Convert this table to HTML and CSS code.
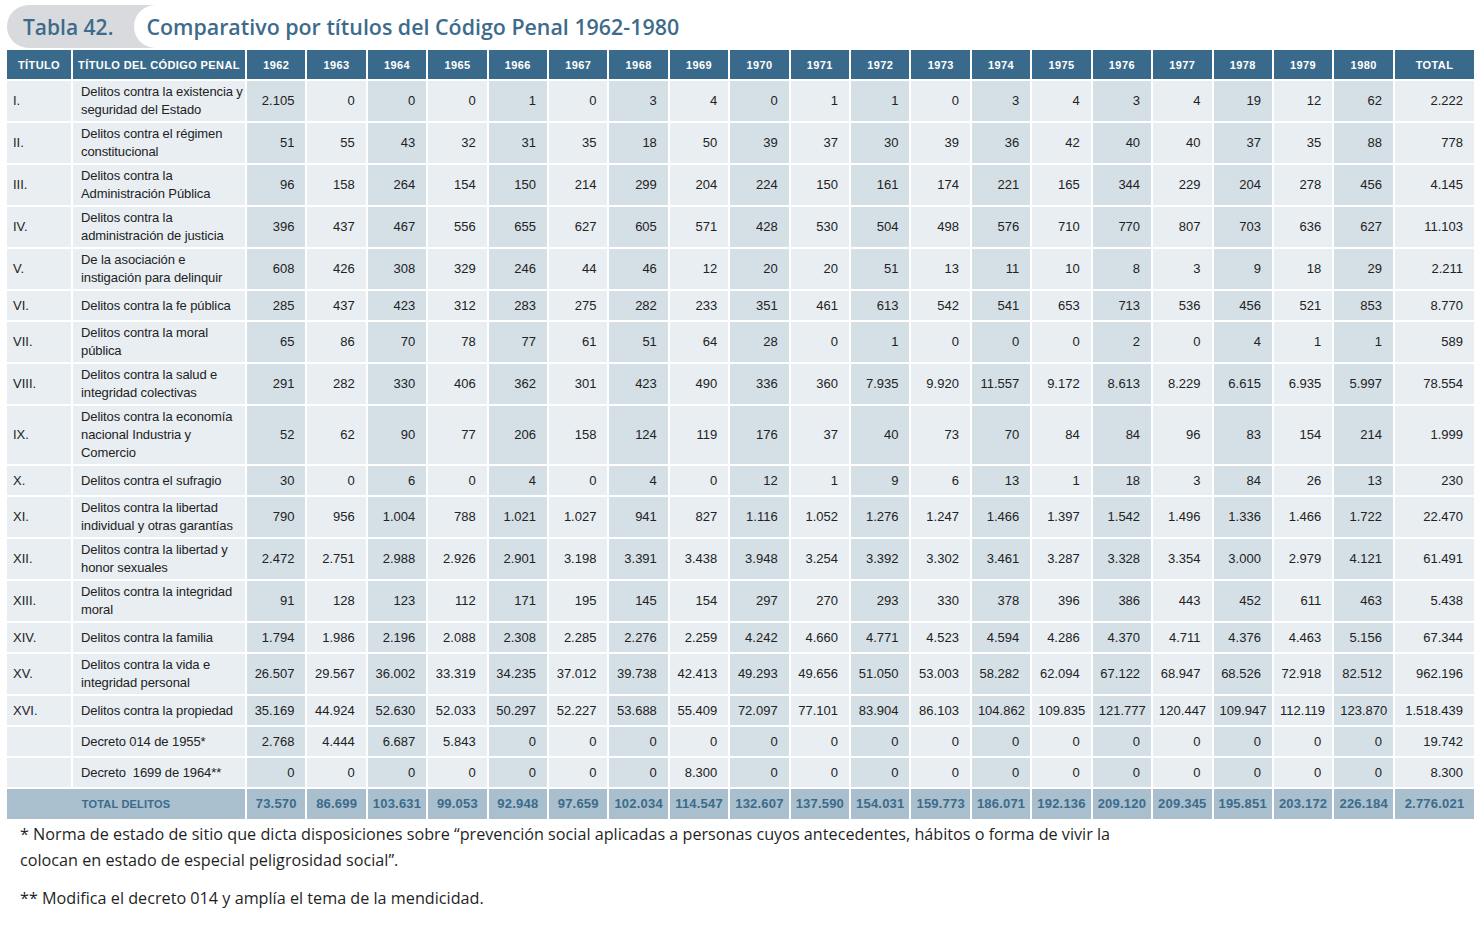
FILE: index.html
```html
<!DOCTYPE html>
<html lang="es">
<head>
<meta charset="utf-8">
<title>Tabla 42</title>
<link rel="stylesheet" href="styles.css">
</head>
<body>
<div class="page">
  <div class="caption">
    <div class="tab">Tabla 42.</div>
    <div class="heading">Comparativo por títulos del Código Penal 1962-1980</div>
  </div>
  <table class="data">
    <colgroup>
      <col class="c-num"><col class="c-desc">
      <col><col><col><col><col><col><col><col><col><col><col><col><col><col><col><col><col><col><col>
      <col class="c-total">
    </colgroup>
    <thead>
      <tr class="h31">
        <th>TÍTULO</th><th>TÍTULO DEL CÓDIGO PENAL</th>
        <th>1962</th><th>1963</th><th>1964</th><th>1965</th><th>1966</th><th>1967</th><th>1968</th><th>1969</th><th>1970</th><th>1971</th><th>1972</th><th>1973</th><th>1974</th><th>1975</th><th>1976</th><th>1977</th><th>1978</th><th>1979</th><th>1980</th>
        <th>TOTAL</th>
      </tr>
    </thead>
    <tbody>
      <tr class="h42"><td>I.</td><td>Delitos contra la existencia y<br>seguridad del Estado</td><td>2.105</td><td>0</td><td>0</td><td>0</td><td>1</td><td>0</td><td>3</td><td>4</td><td>0</td><td>1</td><td>1</td><td>0</td><td>3</td><td>4</td><td>3</td><td>4</td><td>19</td><td>12</td><td>62</td><td>2.222</td></tr>
      <tr class="h42"><td>II.</td><td>Delitos contra el régimen<br>constitucional</td><td>51</td><td>55</td><td>43</td><td>32</td><td>31</td><td>35</td><td>18</td><td>50</td><td>39</td><td>37</td><td>30</td><td>39</td><td>36</td><td>42</td><td>40</td><td>40</td><td>37</td><td>35</td><td>88</td><td>778</td></tr>
      <tr class="h42"><td>III.</td><td>Delitos contra la<br>Administración Pública</td><td>96</td><td>158</td><td>264</td><td>154</td><td>150</td><td>214</td><td>299</td><td>204</td><td>224</td><td>150</td><td>161</td><td>174</td><td>221</td><td>165</td><td>344</td><td>229</td><td>204</td><td>278</td><td>456</td><td>4.145</td></tr>
      <tr class="h42"><td>IV.</td><td>Delitos contra la<br>administración de justicia</td><td>396</td><td>437</td><td>467</td><td>556</td><td>655</td><td>627</td><td>605</td><td>571</td><td>428</td><td>530</td><td>504</td><td>498</td><td>576</td><td>710</td><td>770</td><td>807</td><td>703</td><td>636</td><td>627</td><td>11.103</td></tr>
      <tr class="h42"><td>V.</td><td>De la asociación e<br>instigación para delinquir</td><td>608</td><td>426</td><td>308</td><td>329</td><td>246</td><td>44</td><td>46</td><td>12</td><td>20</td><td>20</td><td>51</td><td>13</td><td>11</td><td>10</td><td>8</td><td>3</td><td>9</td><td>18</td><td>29</td><td>2.211</td></tr>
      <tr class="h31"><td>VI.</td><td>Delitos contra la fe pública</td><td>285</td><td>437</td><td>423</td><td>312</td><td>283</td><td>275</td><td>282</td><td>233</td><td>351</td><td>461</td><td>613</td><td>542</td><td>541</td><td>653</td><td>713</td><td>536</td><td>456</td><td>521</td><td>853</td><td>8.770</td></tr>
      <tr class="h42"><td>VII.</td><td>Delitos contra la moral<br>pública</td><td>65</td><td>86</td><td>70</td><td>78</td><td>77</td><td>61</td><td>51</td><td>64</td><td>28</td><td>0</td><td>1</td><td>0</td><td>0</td><td>0</td><td>2</td><td>0</td><td>4</td><td>1</td><td>1</td><td>589</td></tr>
      <tr class="h42"><td>VIII.</td><td>Delitos contra la salud e<br>integridad colectivas</td><td>291</td><td>282</td><td>330</td><td>406</td><td>362</td><td>301</td><td>423</td><td>490</td><td>336</td><td>360</td><td>7.935</td><td>9.920</td><td>11.557</td><td>9.172</td><td>8.613</td><td>8.229</td><td>6.615</td><td>6.935</td><td>5.997</td><td>78.554</td></tr>
      <tr class="h60"><td>IX.</td><td>Delitos contra la economía<br>nacional Industria y<br>Comercio</td><td>52</td><td>62</td><td>90</td><td>77</td><td>206</td><td>158</td><td>124</td><td>119</td><td>176</td><td>37</td><td>40</td><td>73</td><td>70</td><td>84</td><td>84</td><td>96</td><td>83</td><td>154</td><td>214</td><td>1.999</td></tr>
      <tr class="h31"><td>X.</td><td>Delitos contra el sufragio</td><td>30</td><td>0</td><td>6</td><td>0</td><td>4</td><td>0</td><td>4</td><td>0</td><td>12</td><td>1</td><td>9</td><td>6</td><td>13</td><td>1</td><td>18</td><td>3</td><td>84</td><td>26</td><td>13</td><td>230</td></tr>
      <tr class="h42"><td>XI.</td><td>Delitos contra la libertad<br>individual y otras garantías</td><td>790</td><td>956</td><td>1.004</td><td>788</td><td>1.021</td><td>1.027</td><td>941</td><td>827</td><td>1.116</td><td>1.052</td><td>1.276</td><td>1.247</td><td>1.466</td><td>1.397</td><td>1.542</td><td>1.496</td><td>1.336</td><td>1.466</td><td>1.722</td><td>22.470</td></tr>
      <tr class="h42"><td>XII.</td><td>Delitos contra la libertad y<br>honor sexuales</td><td>2.472</td><td>2.751</td><td>2.988</td><td>2.926</td><td>2.901</td><td>3.198</td><td>3.391</td><td>3.438</td><td>3.948</td><td>3.254</td><td>3.392</td><td>3.302</td><td>3.461</td><td>3.287</td><td>3.328</td><td>3.354</td><td>3.000</td><td>2.979</td><td>4.121</td><td>61.491</td></tr>
      <tr class="h42"><td>XIII.</td><td>Delitos contra la integridad<br>moral</td><td>91</td><td>128</td><td>123</td><td>112</td><td>171</td><td>195</td><td>145</td><td>154</td><td>297</td><td>270</td><td>293</td><td>330</td><td>378</td><td>396</td><td>386</td><td>443</td><td>452</td><td>611</td><td>463</td><td>5.438</td></tr>
      <tr class="h31"><td>XIV.</td><td>Delitos contra la familia</td><td>1.794</td><td>1.986</td><td>2.196</td><td>2.088</td><td>2.308</td><td>2.285</td><td>2.276</td><td>2.259</td><td>4.242</td><td>4.660</td><td>4.771</td><td>4.523</td><td>4.594</td><td>4.286</td><td>4.370</td><td>4.711</td><td>4.376</td><td>4.463</td><td>5.156</td><td>67.344</td></tr>
      <tr class="h42"><td>XV.</td><td>Delitos contra la vida e<br>integridad personal</td><td>26.507</td><td>29.567</td><td>36.002</td><td>33.319</td><td>34.235</td><td>37.012</td><td>39.738</td><td>42.413</td><td>49.293</td><td>49.656</td><td>51.050</td><td>53.003</td><td>58.282</td><td>62.094</td><td>67.122</td><td>68.947</td><td>68.526</td><td>72.918</td><td>82.512</td><td>962.196</td></tr>
      <tr class="h31"><td>XVI.</td><td>Delitos contra la propiedad</td><td>35.169</td><td>44.924</td><td>52.630</td><td>52.033</td><td>50.297</td><td>52.227</td><td>53.688</td><td>55.409</td><td>72.097</td><td>77.101</td><td>83.904</td><td>86.103</td><td>104.862</td><td>109.835</td><td>121.777</td><td>120.447</td><td>109.947</td><td>112.119</td><td>123.870</td><td>1.518.439</td></tr>
      <tr class="h31"><td></td><td>Decreto 014 de 1955*</td><td>2.768</td><td>4.444</td><td>6.687</td><td>5.843</td><td>0</td><td>0</td><td>0</td><td>0</td><td>0</td><td>0</td><td>0</td><td>0</td><td>0</td><td>0</td><td>0</td><td>0</td><td>0</td><td>0</td><td>0</td><td>19.742</td></tr>
      <tr class="h31"><td></td><td>Decreto&nbsp;&nbsp;1699 de 1964**</td><td>0</td><td>0</td><td>0</td><td>0</td><td>0</td><td>0</td><td>0</td><td>8.300</td><td>0</td><td>0</td><td>0</td><td>0</td><td>0</td><td>0</td><td>0</td><td>0</td><td>0</td><td>0</td><td>0</td><td>8.300</td></tr>
    </tbody>
    <tfoot>
      <tr class="h30"><td colspan="2" class="total-label">TOTAL DELITOS</td><td>73.570</td><td>86.699</td><td>103.631</td><td>99.053</td><td>92.948</td><td>97.659</td><td>102.034</td><td>114.547</td><td>132.607</td><td>137.590</td><td>154.031</td><td>159.773</td><td>186.071</td><td>192.136</td><td>209.120</td><td>209.345</td><td>195.851</td><td>203.172</td><td>226.184</td><td>2.776.021</td></tr>
    </tfoot>
  </table>
  <div class="notes">
    <p>* Norma de estado de sitio que dicta disposiciones sobre “prevención social aplicadas a personas cuyos antecedentes, hábitos o forma de vivir la<br>colocan en estado de especial peligrosidad social”.</p>
    <p>** Modifica el decreto 014 y amplía el tema de la mendicidad.</p>
  </div>
</div>
</body>
</html>
```

FILE: styles.css
```css
html, body {
  margin: 0;
  padding: 0;
  background: #ffffff;
}

.page {
  padding: 5px 8px 0 7px;
  font-family: "Liberation Sans", Arial, sans-serif;
  color: #222222;
}

.caption {
  display: flex;
  height: 43px;
  margin-bottom: 2px;
}

.tab {
  display: flex;
  align-items: center;
  background: #d8dadd;
  border-radius: 22px 0 0 22px;
  padding: 0 49px 0 16px;
  margin-right: -28px;
  font-family: "Open Sans", "Liberation Sans", sans-serif;
  font-weight: 600;
  font-size: 21px;
  color: #3d6b8b;
}

.heading {
  position: relative;
  flex: 1;
  display: flex;
  align-items: center;
  background: #ffffff;
  border-radius: 22px 0 0 22px;
  padding-left: 12px;
  font-family: "Open Sans", "Liberation Sans", sans-serif;
  font-weight: 600;
  font-size: 21.4px;
  color: #3d6b8b;
}

.data {
  width: 1467px;
  table-layout: fixed;
  border-collapse: separate;
  border-spacing: 0;
  font-size: 13px;
  line-height: 18px;
}

.c-num { width: 66px; }
.c-desc { width: 174px; }
.c-total { width: 79px; }

.data th,
.data td {
  box-sizing: border-box;
  border-right: 2px solid #ffffff;
  border-bottom: 2px solid #ffffff;
  padding: 0 11px 0 6px;
  vertical-align: middle;
  white-space: nowrap;
  overflow: hidden;
}

.data th:last-child,
.data td:last-child {
  border-right: 0;
}

.h31 { height: 31px; }
.h42 { height: 42px; }
.h60 { height: 60px; }
.h30 { height: 30px; }

.data thead th {
  background: #3a6a8b;
  color: #ffffff;
  font-size: 11px;
  font-weight: 700;
  letter-spacing: 0.4px;
  text-align: center;
  padding: 0 2px;
}

.data tbody td {
  background: #e8eef2;
  text-align: right;
}

.data tbody td:nth-child(odd) {
  background: #d5dfe6;
}

.data tbody td:nth-child(1),
.data tbody td:nth-child(22) {
  background: #e8eef2;
}

.data tbody td:nth-child(1) {
  text-align: left;
  padding-left: 6px;
}

.data tbody td:nth-child(2) {
  text-align: left;
  padding-left: 8px;
  padding-right: 2px;
  letter-spacing: -0.1px;
}

.data tfoot td {
  background: #a9bfcd;
  color: #3b6b8c;
  font-weight: 700;
  font-size: 13px;
  letter-spacing: 0.2px;
  text-align: center;
  padding: 0 2px;
  border-bottom: 0;
}

.data tfoot td.total-label {
  font-size: 11px;
  letter-spacing: 0.2px;
}

.notes {
  padding: 2px 0 0 13px;
  font-family: "Open Sans", "Liberation Sans", sans-serif;
  font-size: 16.2px;
  line-height: 26px;
  color: #1f1f1f;
}

.notes p {
  margin: 0 0 12px 0;
}
```
